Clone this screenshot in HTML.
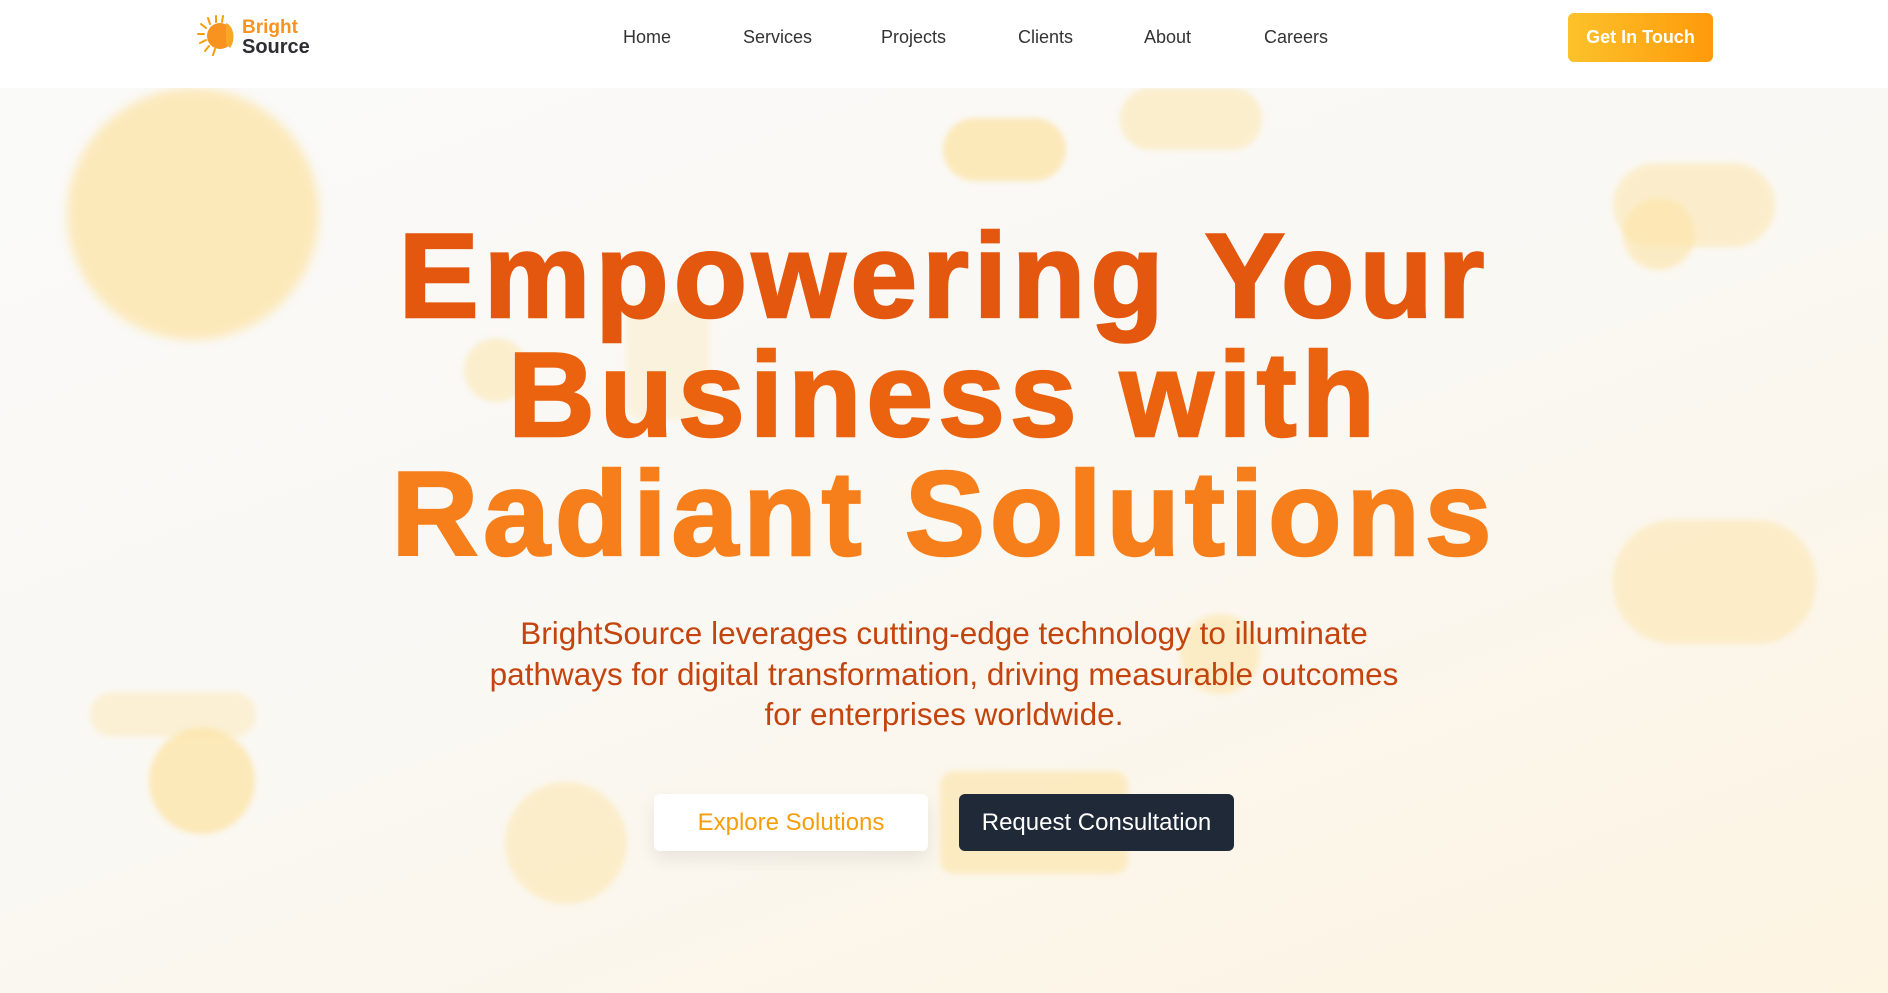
<!DOCTYPE html>
<html><head><meta charset="utf-8"><style>
*{margin:0;padding:0;box-sizing:border-box}
html,body{width:1888px;height:993px;overflow:hidden}
body{font-family:"Liberation Sans",sans-serif;background:linear-gradient(160deg,#fafafa 0%,#faf8f3 50%,#fdf4e2 100%);position:relative}
.hdr{position:absolute;left:0;top:0;width:1888px;height:88px;background:#fff;z-index:3}
.b{position:absolute;background:#fde4a6;filter:blur(3px);opacity:.75}
.nav a{position:absolute;top:27px;font-size:18px;color:#333;text-decoration:none}
.btn{position:absolute;left:1568px;top:13px;width:145px;height:49px;border-radius:6px;background:linear-gradient(90deg,#fcc22a,#fe9a0b);color:#fff;font-size:18px;font-weight:bold;text-align:center;line-height:49px}
h1{position:absolute;left:0;width:1888px;top:217px;text-align:center;font-size:120px;line-height:119px;letter-spacing:5px;font-weight:bold;z-index:2}
h1 span{display:block}
p.sub{position:absolute;left:0;width:1888px;top:613px;text-align:center;font-size:31.5px;line-height:40.5px;color:#c4440f;z-index:2}
.cta{position:absolute;top:794px;height:57px;border-radius:6px;font-size:24px;text-align:center;line-height:57px;z-index:2}
</style></head><body>
<div class="b" style="left:67px;top:88px;width:252px;height:252px;border-radius:50%;filter:blur(5px)"></div>
<div class="b" style="left:943px;top:118px;width:123px;height:63px;border-radius:32px"></div>
<div class="b" style="left:1120px;top:88px;width:142px;height:62px;border-radius:30px;opacity:.5"></div>
<div class="b" style="left:1613px;top:163px;width:162px;height:84px;border-radius:42px;opacity:.5"></div>
<div class="b" style="left:1623px;top:198px;width:72px;height:72px;border-radius:50%;opacity:.6"></div>
<div class="b" style="left:464px;top:338px;width:64px;height:64px;border-radius:50%;opacity:.5"></div>
<div class="b" style="left:626px;top:300px;width:84px;height:120px;border-radius:16px;opacity:.3"></div>
<div class="b" style="left:1613px;top:520px;width:203px;height:124px;border-radius:60px;opacity:.5"></div>
<div class="b" style="left:1180px;top:614px;width:80px;height:80px;border-radius:50%;opacity:.55"></div>
<div class="b" style="left:90px;top:692px;width:166px;height:45px;border-radius:22px;opacity:.4"></div>
<div class="b" style="left:149px;top:728px;width:106px;height:106px;border-radius:50%;opacity:.75"></div>
<div class="b" style="left:505px;top:782px;width:122px;height:122px;border-radius:50%;opacity:.5"></div>
<div class="b" style="left:940px;top:771px;width:188px;height:103px;border-radius:14px;opacity:.6"></div>

<div class="hdr">
<svg style="position:absolute;left:196px;top:14px" width="44" height="44" viewBox="0 0 44 44">
<g stroke="#f59e0b" stroke-width="2" stroke-linecap="round">
<line x1="20" y1="2" x2="20" y2="8"/><line x1="12" y1="4" x2="14" y2="10"/><line x1="5" y1="10" x2="10" y2="14"/><line x1="2" y1="20" x2="8" y2="20"/><line x1="4" y1="29" x2="10" y2="26"/><line x1="9" y1="37" x2="13" y2="32"/><line x1="17" y1="41" x2="19" y2="35"/><line x1="27" y1="2" x2="26" y2="8"/></g>
<circle cx="24" cy="22" r="13" fill="#f7931e"/><path d="M30 9 C38 12 40 26 34 34 L30 30 Z" fill="#f9a825"/>
</svg>
<div style="position:absolute;left:242px;top:19px;font-size:19px;font-weight:bold;line-height:18px;color:#f7931e">Bright</div>
<div style="position:absolute;left:242px;top:37px;font-size:20px;font-weight:bold;line-height:20px;color:#2d2d33">Source</div>
<div class="nav"><a style="left:623px">Home</a><a style="left:743px">Services</a><a style="left:881px">Projects</a><a style="left:1018px">Clients</a><a style="left:1144px">About</a><a style="left:1264px">Careers</a></div>
<div class="btn">Get In Touch</div>
</div>

<h1><span style="color:#e4570e;-webkit-text-stroke:2.5px #e4570e">Empowering Your</span><span style="color:#eb620f;-webkit-text-stroke:2.5px #eb620f">Business with</span><span style="color:#f67f1b;-webkit-text-stroke:2.5px #f67f1b">Radiant Solutions</span></h1>
<p class="sub">BrightSource leverages cutting-edge technology to illuminate<br>pathways for digital transformation, driving measurable outcomes<br>for enterprises worldwide.</p>
<div class="cta" style="left:654px;width:274px;background:#fff;color:#f59e0b;box-shadow:0 8px 18px rgba(0,0,0,.08)">Explore Solutions</div>
<div class="cta" style="left:959px;width:275px;background:#1f2937;color:#fff">Request Consultation</div>
</body></html>
